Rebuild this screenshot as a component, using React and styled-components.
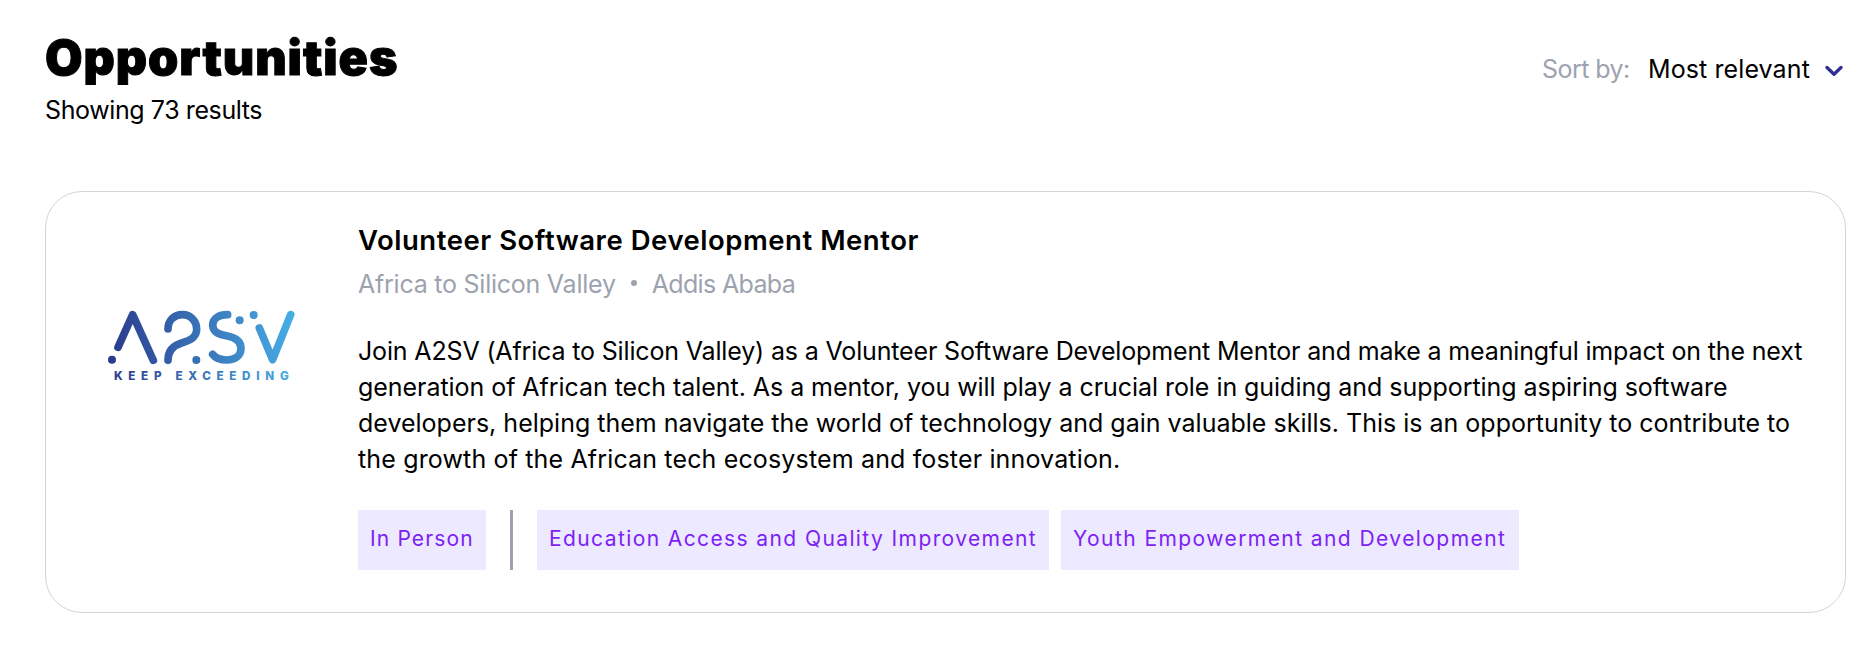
import React from 'react';
import styled, { createGlobalStyle } from 'styled-components';

const GlobalStyle = createGlobalStyle`
  *, *::before, *::after { box-sizing: border-box; }
  body {
    margin: 0;
    background: #fff;
    color: #000;
    font-family: Inter, "Liberation Sans", sans-serif;
    font-size: 25px;
    line-height: 36px;
  }
  h1, h2, p { margin: 0; }
`;

const Page = styled.main`
  height: 659px;
  padding: 33px 14px 0 45px;
`;

const Header = styled.header`
  display: flex;
  justify-content: space-between;
  align-items: flex-start;
  height: 158px;
`;

const Heading = styled.h1`
  padding-top: 1px;
  font-size: 48.5px;
  line-height: 48px;
  font-weight: 900;
  letter-spacing: 0.95px;
  -webkit-text-stroke: 1px #000;
`;

const ResultCount = styled.p`
  margin-top: 10px;
  letter-spacing: -0.4px;
`;

const SortControl = styled.div`
  display: flex;
  align-items: center;
  padding: 18px 3px 0 0;
  white-space: nowrap;
`;

const SortLabel = styled.span`
  width: 106px;
  color: #9ca3af;
  letter-spacing: -0.56px;
`;

const SortValue = styled.span`
  width: 177px;
  letter-spacing: 0.1px;
`;

const Chevron = styled.svg`
  display: block;
  width: 18px;
  height: 12px;
  margin-top: 4px;
`;

const Card = styled.article`
  display: flex;
  height: 422px;
  padding: 30px 0 0 49px;
  border: 1px solid #d1d5db;
  border-radius: 37px;
`;

const Logo = styled.svg`
  display: block;
  flex: none;
  width: 210px;
  height: 100px;
  margin: 73px 53px 0 0;
`;

const Details = styled.div`
  flex: 1;
  min-width: 0;
`;

const Title = styled.h2`
  font-size: 27.5px;
  line-height: 36px;
  font-weight: 600;
  letter-spacing: 0.53px;
`;

const Meta = styled.div`
  display: flex;
  align-items: center;
  margin-top: 8px;
  color: #9ca3af;
`;

const MetaItem = styled.span`
  letter-spacing: ${(p) => p.$spacing}px;
`;

const Dot = styled.span`
  width: 6px;
  height: 6px;
  margin: 0 15px 2px;
  border-radius: 50%;
  background: #9ca3af;
`;

const Description = styled.p`
  margin-top: 31px;
  white-space: nowrap;
`;

const Line = styled.span`
  display: block;
  letter-spacing: ${(p) => p.$spacing}px;
`;

const Tags = styled.div`
  display: flex;
  margin-top: 33px;
`;

const Tag = styled.span`
  width: ${(p) => p.$width}px;
  height: 60px;
  padding-left: 12px;
  margin-right: ${(p) => p.$gap || 0}px;
  background: #ede9fe;
  color: #7c22f5;
  font-size: 21px;
  line-height: 58px;
  letter-spacing: ${(p) => p.$spacing || 1.4}px;
  white-space: nowrap;
`;

const Divider = styled.span`
  width: 3px;
  height: 60px;
  margin-right: 24px;
  background: #9ca3af;
`;

const lines = [
  ['Join A2SV (Africa to Silicon Valley) as a Volunteer Software Development Mentor and make a meaningful impact on the next', -0.155],
  ['generation of African tech talent. As a mentor, you will play a crucial role in guiding and supporting aspiring software', -0.048],
  ['developers, helping them navigate the world of technology and gain valuable skills. This is an opportunity to contribute to', 0.004],
  ['the growth of the African tech ecosystem and foster innovation.', 0.15],
];

function A2svLogo() {
  return (
    <Logo viewBox="0 0 630 300" aria-label="A2SV">
      <defs>
        <linearGradient id="brand" gradientUnits="userSpaceOnUse" x1="42" y1="150" x2="600" y2="120">
          <stop offset="0" stopColor="#2a3a8c" />
          <stop offset="0.5" stopColor="#3a74b8" />
          <stop offset="1" stopColor="#46aee6" />
        </linearGradient>
      </defs>
      <g fill="none" stroke="url(#brand)" strokeWidth="23" strokeLinecap="round" strokeLinejoin="round">
        <path d="M69 157 L113 59 L175 196" />
        <path d="M219 102 C219 75 238 59 262 59 C287 59 305 78 305 102 C305 128 285 137 262 143 C237 150 219 165 219 196" />
        <path d="M398 59 C372 59 353 70 353 90 C353 113 375 119 397 123 C422 128 438 138 438 160 C438 183 419 195 396 195 C376 195 362 190 353 178" />
        <path d="M493 99 L533 194 L587 59" />
      </g>
      <g fill="url(#brand)">
        <circle cx="51" cy="194" r="12" />
        <circle cx="304" cy="195" r="12" />
        <circle cx="434" cy="76" r="12" />
        <circle cx="476" cy="60" r="12" />
        <text x="57" y="254" textLength="524" fontFamily="Inter, sans-serif" fontSize="35" fontWeight="800">
          KEEP EXCEEDING
        </text>
      </g>
    </Logo>
  );
}

export default function App() {
  return (
    <>
      <GlobalStyle />
      <Page>
        <Header>
          <div>
            <Heading>Opportunities</Heading>
            <ResultCount>Showing 73 results</ResultCount>
          </div>
          <SortControl>
            <SortLabel>Sort by:</SortLabel>
            <SortValue>Most relevant</SortValue>
            <Chevron viewBox="0 0 18 12">
              <path d="M2 2.5 L9 9.3 L16 2.5" fill="none" stroke="#312e91" strokeWidth="3.3" strokeLinecap="round" strokeLinejoin="round" />
            </Chevron>
          </SortControl>
        </Header>
        <Card>
          <A2svLogo />
          <Details>
            <Title>Volunteer Software Development Mentor</Title>
            <Meta>
              <MetaItem $spacing={-0.24}>Africa to Silicon Valley</MetaItem>
              <Dot />
              <MetaItem $spacing={-0.654}>Addis Ababa</MetaItem>
            </Meta>
            <Description>
              {lines.map(([text, spacing]) => (
                <Line key={text} $spacing={spacing}>{text}</Line>
              ))}
            </Description>
            <Tags>
              <Tag $width={128} $gap={24} $spacing={1.15}>In Person</Tag>
              <Divider />
              <Tag $width={512} $gap={12}>Education Access and Quality Improvement</Tag>
              <Tag $width={458} $spacing={1.43}>Youth Empowerment and Development</Tag>
            </Tags>
          </Details>
        </Card>
      </Page>
    </>
  );
}
